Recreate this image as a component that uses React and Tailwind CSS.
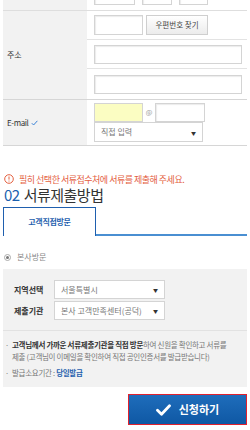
import React from "react";

const font = { fontFamily: '"Noto Sans CJK KR", "Noto Sans", sans-serif' };

function Input({ className = "" }) {
  return (
    <div
      className={`border border-[#d4d4d4] bg-white shadow-[inset_1px_1px_1px_#ececec] ${className}`}
    />
  );
}

function Select({ label, className = "" }) {
  return (
    <div
      className={`flex items-center justify-between border border-[#d4d4d4] bg-white pl-[6px] pr-[6px] text-[8px] text-[#777] ${className}`}
    >
      <span>{label}</span>
      <span className="text-[5px] text-[#333]">▼</span>
    </div>
  );
}

export default function App() {
  return (
    <div className="w-[250px] h-[430px] overflow-hidden bg-white px-[3px] leading-none" style={font}>
      {/* cut row above */}
      <div className="flex h-[10px] overflow-hidden">
        <div className="w-[84px] bg-[#f2f2f2]" />
        <div className="flex items-end gap-[7px] pb-[5px] pl-[7px]">
          <Input className="w-[41px] h-[14px] shrink-0" />
          <Input className="w-[30px] h-[14px] shrink-0" />
          <Input className="w-[29px] h-[14px] shrink-0" />
        </div>
      </div>

      {/* 주소 */}
      <div className="flex border-t border-[#dedede]">
        <div className="flex w-[84px] items-center bg-[#f2f2f2] pl-[4px] text-[8px] text-[#333]">주소</div>
        <div className="flex flex-1 flex-col">
          <div className="flex h-[29px] items-center gap-[3px] border-b border-[#e3e3e3] pl-[7px]">
            <Input className="w-[49px] h-[20px]" />
            <div className="flex h-[20px] w-[62px] items-center justify-center border border-[#cfcfcf] bg-gradient-to-b from-white to-[#ececec] text-[7.5px] text-[#444]">
              우편번호 찾기
            </div>
          </div>
          <div className="flex h-[29px] items-center border-b border-[#e3e3e3] pl-[7px]">
            <Input className="w-[148px] h-[19px]" />
          </div>
          <div className="flex h-[30px] items-center pl-[7px]">
            <Input className="w-[148px] h-[19px]" />
          </div>
        </div>
      </div>

      {/* E-mail */}
      <div className="flex border-y border-[#d6d6d6]">
        <div className="flex w-[84px] items-center gap-[2px] bg-[#f2f2f2] pl-[4px] text-[8px] tracking-[-0.4px] text-[#333]">
          E-mail
          <svg width="7" height="6" viewBox="0 0 7 6" className="ml-[1px]">
            <path d="M0.8 3.2 L2.6 5 L6.4 0.8" fill="none" stroke="#3b82d6" strokeWidth="1" />
          </svg>
        </div>
        <div className="flex flex-col pb-[3px] pl-[7px] pt-[3px]">
          <div className="flex items-center">
            <div className="h-[19px] w-[49px] border border-[#d4d4d4] bg-[#fbfdc2]" />
            <span className="w-[12px] text-center text-[7px] text-[#999]">@</span>
            <Input className="h-[19px] w-[50px]" />
          </div>
          <Select label="직접 입력" className="h-[20px] w-[109px]" />
        </div>
      </div>

      {/* warning */}
      <div className="mt-[28px] flex items-center gap-[5px] pl-[1px] text-[9px] tracking-[-0.5px] text-[#e4603f]">
        <svg width="10" height="10" viewBox="0 0 10 10" className="shrink-0">
          <circle cx="5" cy="5" r="4.3" fill="none" stroke="#e4603f" strokeWidth="1" />
          <path d="M5 2.5 V5.6 M5 6.6 V7.5" stroke="#e4603f" strokeWidth="1" />
        </svg>
        필히 선택한 서류접수처에 서류를 제출해 주세요.
      </div>

      {/* title */}
      <div className="mt-[3px] flex items-baseline gap-[4px] pl-[1px] text-[15px] tracking-[-0.5px]">
        <span className="text-[#1b5fae]">02</span>
        <span className="text-[#333]">서류제출방법</span>
      </div>

      {/* tabs */}
      <div className="mt-[5px] flex h-[29px]">
        <div className="flex w-[93px] items-center justify-center border-x border-t border-[#1f5fae] text-[8px] font-bold tracking-[-0.3px] text-[#1f5fae]">
          고객직접방문
        </div>
        <div className="flex-1 border-b-2 border-[#4a8fd2]" />
      </div>

      {/* radio */}
      <div className="mt-[17px] flex items-center gap-[6px] pl-[1px] text-[8px] text-[#888]">
        <span className="flex h-[7px] w-[7px] items-center justify-center rounded-full border border-[#aaa]">
          <span className="h-[3px] w-[3px] rounded-full bg-[#777]" />
        </span>
        본사방문
      </div>

      {/* gray box */}
      <div className="mt-[8px] bg-[#f2f2f2] px-[11px] pt-[11px] pb-[8px]">
        <div className="flex flex-col gap-[2px]">
          <div className="flex items-center">
            <span className="w-[40px] text-[8px] font-bold text-[#333]">지역선택</span>
            <Select label="서울특별시" className="h-[19px] w-[111px]" />
          </div>
          <div className="flex items-center">
            <span className="w-[40px] text-[8px] font-bold text-[#333]">제출기관</span>
            <Select label="본사 고객만족센터(공덕)" className="h-[19px] w-[111px]" />
          </div>
        </div>
        <div className="-mx-[11px] mt-[10px] border-t border-[#e2e2e2]" />
        <div className="-ml-[9px] mt-[8px] flex flex-col gap-[4px] text-[7.5px] tracking-[-0.3px] text-[#777]">
          <div className="flex">
            <span className="w-[7px] shrink-0 leading-[12px]">·</span>
            <p className="leading-[12px] whitespace-nowrap">
              <b className="font-bold text-[#333]">고객님께서 가까운 서류제출기관을 직접 방문</b>하여 신원을 확인하고 서류를
              <br />
              제출 (고객님이 이메일을 확인하여 직접 공인인증서를 발급받습니다)
            </p>
          </div>
          <div className="flex">
            <span className="w-[7px] shrink-0 leading-[12px]">·</span>
            <p className="leading-[12px]">
              발급소요기간 : <b className="font-bold text-[#1f5fae]">당일발급</b>
            </p>
          </div>
        </div>
      </div>

      {/* submit */}
      <div className="mt-[7px] flex justify-end">
        <button className="flex h-[31px] w-[119px] items-center justify-center gap-[8px] border border-[#e0212e] bg-gradient-to-b from-[#1e6dbb] to-[#0f58a4] text-[11px] font-bold text-white">
          <svg width="15" height="12" viewBox="0 0 15 12">
            <path d="M1.5 6.3 L5.5 10.2 L13.5 1.8" fill="none" stroke="white" strokeWidth="2.8" strokeLinecap="round" strokeLinejoin="round" />
          </svg>
          신청하기
        </button>
      </div>
    </div>
  );
}
